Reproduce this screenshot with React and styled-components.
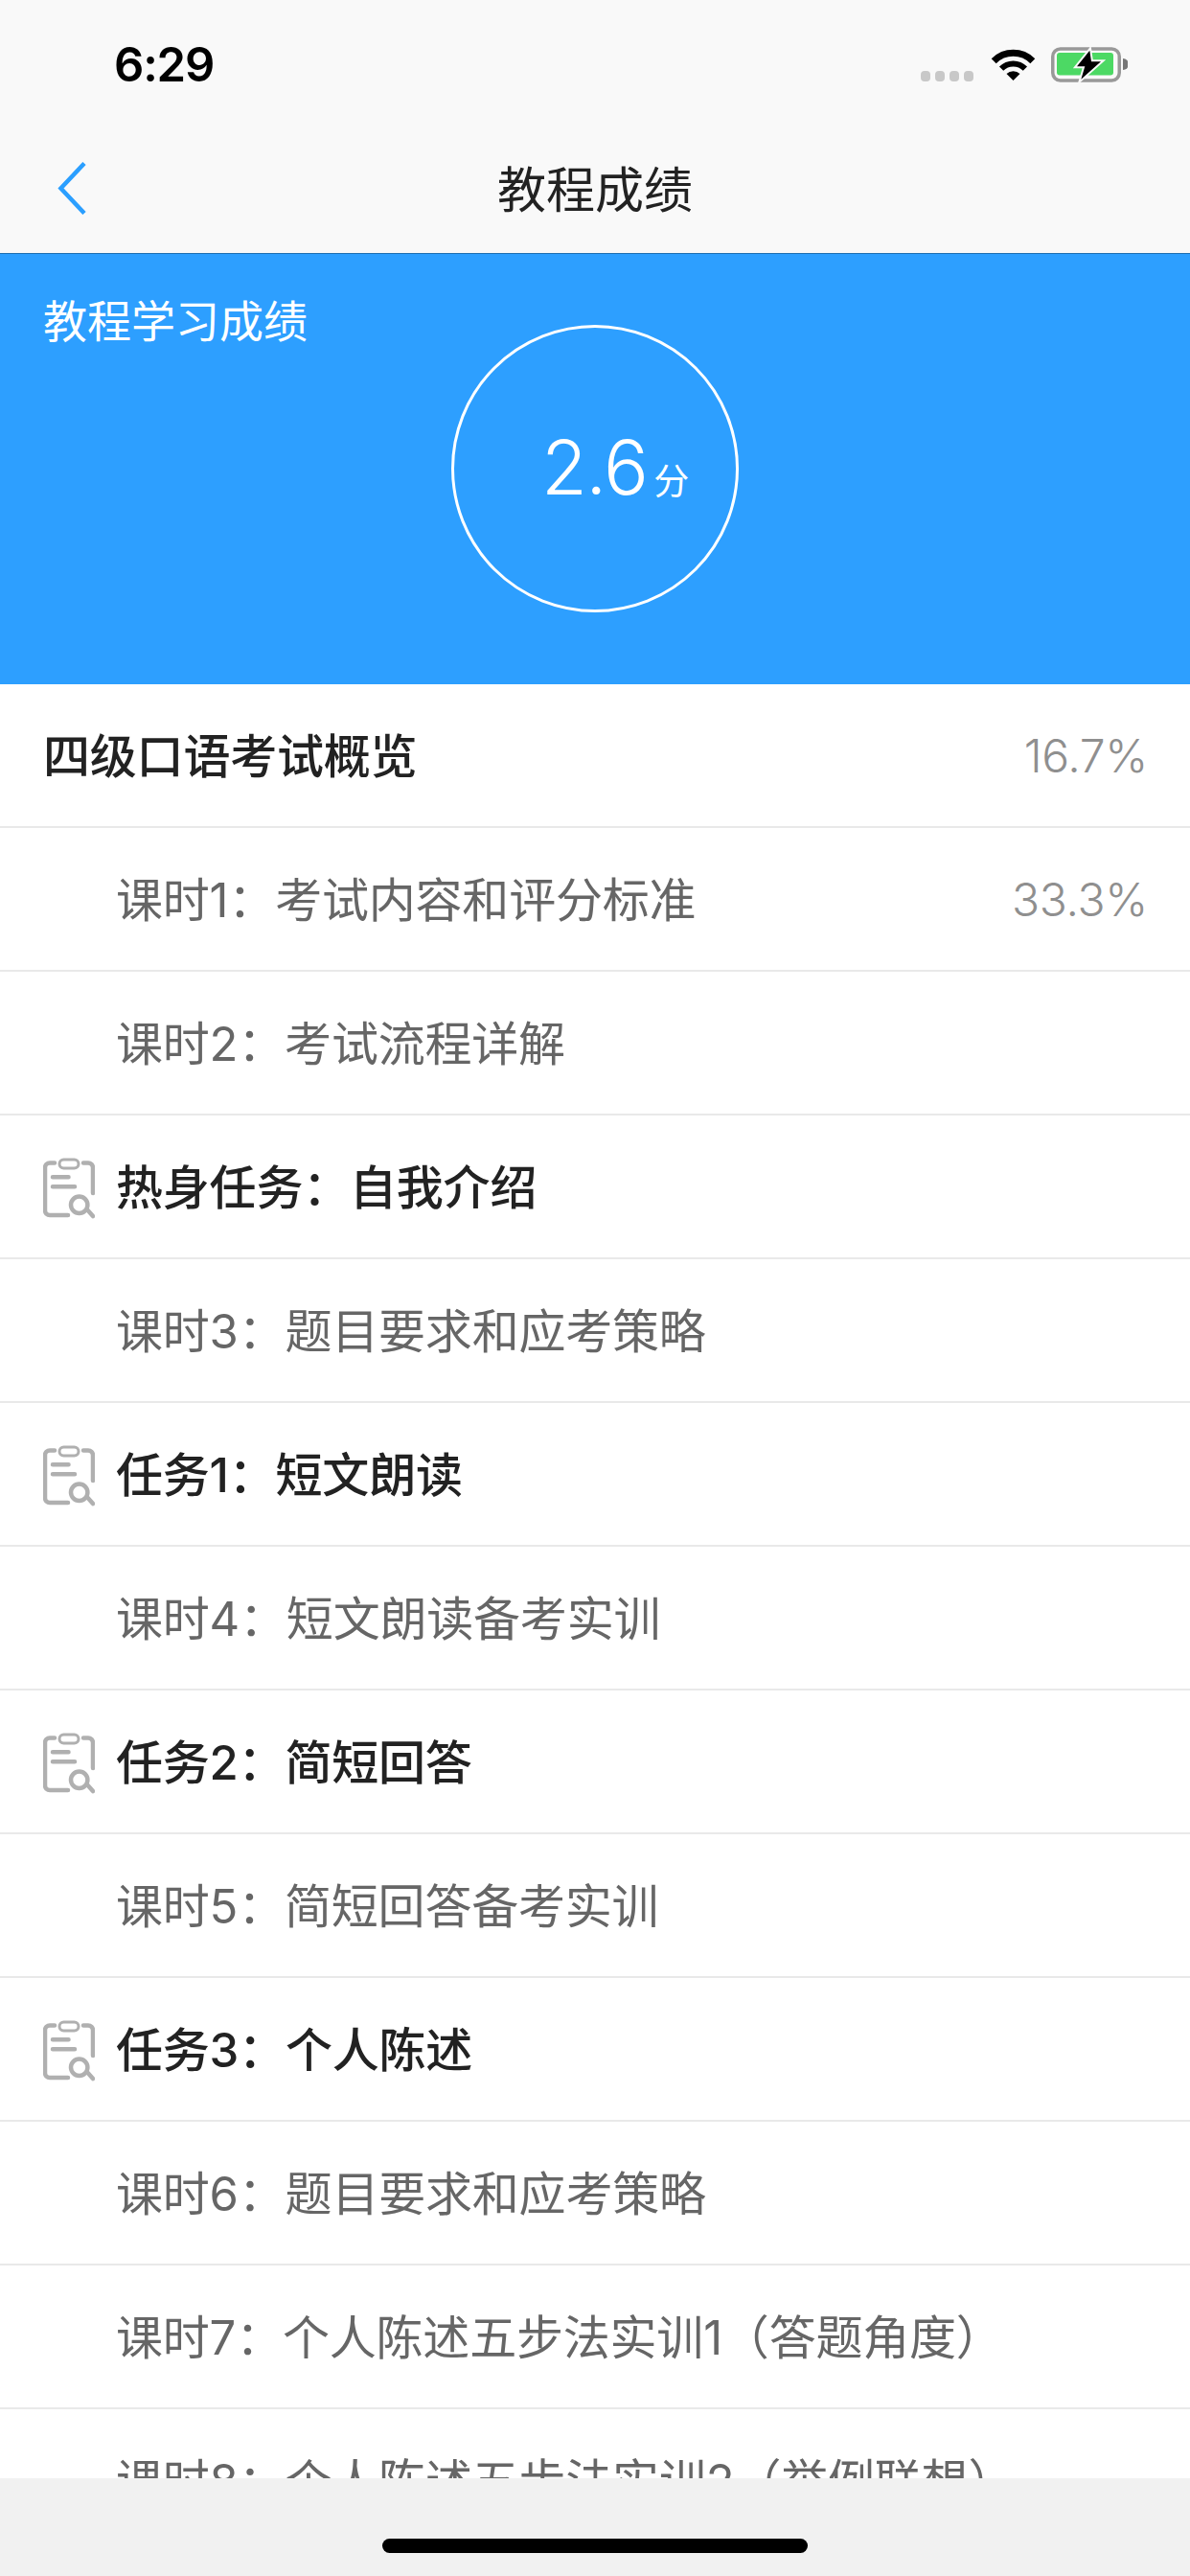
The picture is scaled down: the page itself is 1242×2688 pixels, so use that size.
import React from "react";
import styled, { createGlobalStyle } from "styled-components";

const rows = [
  { type: "chapter", title: "四级口语考试概览", score: "16.7%" },
  { type: "lesson", title: "课时1：考试内容和评分标准", score: "33.3%" },
  { type: "lesson", title: "课时2：考试流程详解" },
  { type: "task", title: "热身任务：自我介绍" },
  { type: "lesson", title: "课时3：题目要求和应考策略" },
  { type: "task", title: "任务1：短文朗读" },
  { type: "lesson", title: "课时4：短文朗读备考实训" },
  { type: "task", title: "任务2：简短回答" },
  { type: "lesson", title: "课时5：简短回答备考实训" },
  { type: "task", title: "任务3：个人陈述" },
  { type: "lesson", title: "课时6：题目要求和应考策略" },
  { type: "lesson", title: "课时7：个人陈述五步法实训1（答题角度）" },
  { type: "lesson", title: "课时8：个人陈述五步法实训2（举例联想）" },
];

const WifiIcon = () => (
  <svg width="50" height="34" viewBox="0 0 50 34" fill="none" stroke="#000">
    <path d="M4.2 12.7A28.7 28.7 0 0 1 44.8 12.7" strokeWidth="7" />
    <path d="M12.1 20.6A17.5 17.5 0 0 1 36.9 20.6" strokeWidth="6" />
    <path d="M17.5 26A10 10 0 0 1 31.5 26L24.5 33Z" fill="#000" stroke="none" />
  </svg>
);

const BatteryIcon = () => (
  <svg width="80" height="42" viewBox="0 0 80 42" fill="none">
    <rect x="1.75" y="4" width="69.5" height="33" rx="8" stroke="#999" strokeWidth="3.5" />
    <rect x="6" y="8" width="59" height="23.5" rx="3" fill="#4cd964" />
    <path d="M75 14a6 6 0 0 1 0 12Z" fill="#777" />
    <path
      d="M40.3 5.7L27 22.3H35.3L31.3 35.7L52 17.3H42Z"
      fill="#000"
      stroke="#f9f9f9"
      strokeWidth="4"
      paintOrder="stroke"
    />
  </svg>
);

const BackIcon = () => (
  <svg width="30" height="55" viewBox="0 0 30 55" fill="none" stroke="#2b9fff" strokeWidth="4.5">
    <path d="M28 1.5L3.5 27.5L28 53.5" />
  </svg>
);

const TaskIcon = () => (
  <svg width="54" height="64" viewBox="0 0 54 64" fill="none" stroke="#b0b0b0" strokeWidth="4.5" strokeLinecap="round">
    <path d="M12 5.5H7a5 5 0 0 0-5 5V55a5 5 0 0 0 5 5H26" />
    <path d="M42 5.5H47a5 5 0 0 1 5 5V37" />
    <rect x="17" y="2" width="20" height="9" rx="4.5" strokeWidth="3" />
    <path d="M10 20.3H26.5M10 30.3H33" />
    <circle cx="37.7" cy="49.3" r="8.7" />
    <path d="M46.7 55L52 61" />
  </svg>
);

export default function App() {
  return (
    <Page>
      <GlobalStyle />
      <Header>
        <StatusBar>
          <Time>6:29</Time>
          <StatusIcons>
            <Signal>
              <SignalDot />
              <SignalDot />
              <SignalDot />
              <SignalDot />
            </Signal>
            <WifiIcon />
            <BatteryIcon />
          </StatusIcons>
        </StatusBar>
        <NavBar>
          <BackButton>
            <BackIcon />
          </BackButton>
          <NavTitle>教程成绩</NavTitle>
        </NavBar>
      </Header>
      <Hero>
        <HeroLabel>教程学习成绩</HeroLabel>
        <ScoreCircle>
          <ScoreValue>2.6</ScoreValue>
          <ScoreUnit>分</ScoreUnit>
        </ScoreCircle>
      </Hero>
      <List>
        {rows.map((row) => (
          <Row key={row.title} $type={row.type}>
            {row.type === "task" && (
              <IconSlot>
                <TaskIcon />
              </IconSlot>
            )}
            <RowTitle $type={row.type}>{row.title}</RowTitle>
            {row.score && <RowScore>{row.score}</RowScore>}
          </Row>
        ))}
      </List>
      <HomeBar>
        <HomeIndicator />
      </HomeBar>
    </Page>
  );
}

const GlobalStyle = createGlobalStyle`
  body {
    margin: 0;
    background: #fff;
    font-family: Inter, "Noto Sans CJK SC", sans-serif;
  }
`;
const Page = styled.div`
  width: 1242px;
  height: 2688px;
  display: flex;
  flex-direction: column;
  overflow: hidden;
`;
const Header = styled.div`
  height: 264px;
  background: #f9f9f9;
  flex-shrink: 0;
`;
const StatusBar = styled.div`
  height: 132px;
  box-sizing: border-box;
  padding: 0 65px 0 119px;
  display: flex;
  justify-content: space-between;
  align-items: flex-start;
`;
const Time = styled.div`
  margin-top: 39px;
  font-size: 49px;
  line-height: 58px;
  font-weight: 600;
  letter-spacing: -1.2px;
  color: #000;
`;
const StatusIcons = styled.div`
  margin-top: 47px;
  height: 39px;
  display: flex;
  align-items: flex-end;
  svg:nth-child(2) {
    margin: 0 14px 1px 17px;
  }
  svg:nth-child(3) {
    margin-bottom: -3px;
  }
`;
const Signal = styled.div`
  display: flex;
  gap: 5px;
  margin-bottom: 1px;
`;
const SignalDot = styled.div`
  width: 10px;
  height: 11px;
  border-radius: 4px;
  background: #c8c8c8;
`;
const NavBar = styled.div`
  height: 132px;
  display: grid;
  align-items: center;
  justify-items: center;
`;
const BackButton = styled.div`
  grid-area: 1 / 1;
  justify-self: start;
  margin: 0 0 3px 60px;
  display: flex;
`;
const NavTitle = styled.div`
  grid-area: 1 / 1;
  font-size: 51px;
  padding-bottom: 6px;
  color: #222;
`;
const Hero = styled.div`
  height: 450px;
  flex-shrink: 0;
  background: #2d9fff;
  border-top: 1px solid #1f6fb2;
  box-sizing: border-box;
  display: grid;
  justify-items: center;
  align-items: start;
`;
const HeroLabel = styled.div`
  grid-area: 1 / 1;
  justify-self: start;
  margin: 40px 0 0 45px;
  font-size: 46px;
  line-height: 60px;
  color: #fff;
`;
const ScoreCircle = styled.div`
  grid-area: 1 / 1;
  margin-top: 74px;
  width: 300px;
  height: 300px;
  box-sizing: border-box;
  border: 3px solid #fff;
  border-radius: 50%;
  padding-left: 91px;
  display: flex;
  align-items: baseline;
  line-height: 292px;
  color: #fff;
`;
const ScoreValue = styled.span`
  font-size: 78px;
  font-weight: 300;
  letter-spacing: -1.5px;
`;
const ScoreUnit = styled.span`
  margin-left: 7px;
  font-size: 37px;
`;
const List = styled.div`
  flex: 1;
  min-height: 0;
  overflow: hidden;
  background: #fff;
`;
const Row = styled.div`
  height: 150px;
  box-sizing: border-box;
  border-bottom: 2px solid #e9e9e9;
  padding: 0 44px 0 ${(p) => (p.$type === "lesson" ? "121px" : "45px")};
  display: flex;
  align-items: center;
`;
const IconSlot = styled.div`
  width: 76px;
  flex-shrink: 0;
  display: flex;
  margin-top: 4px;
`;
const RowTitle = styled.div`
  flex: 1;
  font-size: 49px;
  letter-spacing: -0.2px;
  padding-bottom: 6px;
  font-weight: ${(p) => (p.$type === "lesson" ? 400 : 500)};
  color: ${(p) => (p.$type === "lesson" ? "#666" : "#222")};
`;
const RowScore = styled.div`
  font-size: 48px;
  font-weight: 300;
  letter-spacing: -0.3px;
  color: #8f8f8f;
`;
const HomeBar = styled.div`
  height: 102px;
  flex-shrink: 0;
  background: #f1f1f1;
  display: flex;
  justify-content: center;
  padding-top: 63px;
  box-sizing: border-box;
`;
const HomeIndicator = styled.div`
  width: 444px;
  height: 15px;
  border-radius: 8px;
  background: #000;
`;
